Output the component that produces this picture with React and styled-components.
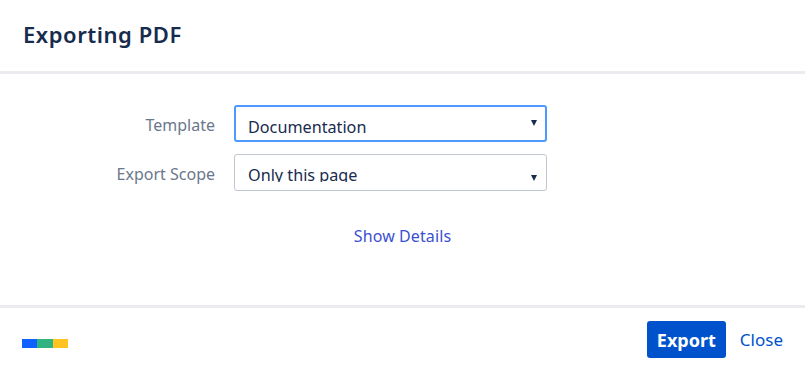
import React from "react";
import styled, { createGlobalStyle } from "styled-components";

const GlobalStyle = createGlobalStyle`
  html, body {
    margin: 0;
    padding: 0;
    background: #ffffff;
  }
  body {
    font-family: "Noto Sans", "Open Sans", sans-serif;
    color: #172b4d;
  }
`;

const Dialog = styled.div`
  width: 805px;
  height: 368px;
  display: flex;
  flex-direction: column;
  background: #fff;
`;

const Header = styled.header`
  height: 74px;
  flex: none;
  box-sizing: border-box;
  padding: 0 23px 4px;
  display: flex;
  align-items: center;
  border-bottom: 3px solid #ebecf0;
`;

const Title = styled.h1`
  margin: 0;
  font-size: 22px;
  font-weight: 600;
  color: #172b4d;
  letter-spacing: 0.55px;
`;

const Body = styled.div`
  height: 234px;
  flex: none;
  box-sizing: border-box;
  padding-top: 31px;
  border-bottom: 3px solid #ebecf0;
  display: flex;
  flex-direction: column;
`;

const Form = styled.div`
  display: grid;
  grid-template-columns: 215px 313px;
  column-gap: 19px;
  row-gap: 12px;
  align-items: center;
`;

const Label = styled.label`
  text-align: right;
  font-size: 16px;
  color: #6b778c;
  margin-top: 2px;
`;

const Select = styled.div`
  position: relative;
  height: 37px;
  box-sizing: border-box;
  border: ${(p) => (p.$focused ? "2px solid #4c9aff" : "1px solid #c1c7d0")};
  border-radius: 3px;
  padding-left: ${(p) => (p.$focused ? "12px" : "13px")};
  overflow: hidden;
  font-size: 16.2px;
  color: #172b4d;
  background: #fff;
`;

/* the scope field's value sits low and loses its descenders, as in the original */
const SelectText = styled.div`
  margin-top: 9px;
  height: ${(p) => (p.$clipped ? "18px" : "22px")};
  line-height: 22px;
  overflow: hidden;
  white-space: nowrap;
`;

const Caret = styled.span`
  position: absolute;
  right: ${(p) => (p.$focused ? "8px" : "9px")};
  top: ${(p) => (p.$focused ? "13px" : "20px")};
  width: 0;
  height: 0;
  border-left: 3px solid transparent;
  border-right: 3px solid transparent;
  border-top: 6px solid #172b4d;
`;

const DetailsRow = styled.div`
  display: flex;
  justify-content: center;
  padding-top: 34px;
`;

const Link = styled.a`
  font-size: 16px;
  color: #3b4fd1;
  text-decoration: none;
  cursor: pointer;
  letter-spacing: 0.1px;
`;

const Footer = styled.footer`
  height: 60px;
  flex: none;
  display: flex;
  align-items: center;
  justify-content: space-between;
  padding: 0 22px;
`;

const Brand = styled.div`
  display: flex;
  height: 9px;
  margin-top: 11px;
`;

const BrandBar = styled.span`
  width: ${(p) => p.$w}px;
  height: 9px;
  background: ${(p) => p.$color};
`;

const Actions = styled.div`
  display: flex;
  align-items: center;
  gap: 14px;
  margin-top: 3px;
`;

const PrimaryButton = styled.button`
  height: 37px;
  width: 79px;
  border: none;
  border-radius: 3px;
  background: #0052cc;
  color: #fff;
  font-family: inherit;
  font-size: 18px;
  font-weight: 700;
  cursor: pointer;
  padding: 0;
`;

const LinkButton = styled.button`
  border: none;
  background: none;
  padding: 0;
  font-family: inherit;
  font-size: 17px;
  color: #0052cc;
  cursor: pointer;
`;

export default function App() {
  return (
    <>
      <GlobalStyle />
      <Dialog>
        <Header>
          <Title>Exporting PDF</Title>
        </Header>
        <Body>
          <Form>
            <Label>Template</Label>
            <Select $focused>
              <SelectText>Documentation</SelectText>
              <Caret $focused />
            </Select>
            <Label>Export Scope</Label>
            <Select>
              <SelectText $clipped>Only this page</SelectText>
              <Caret />
            </Select>
          </Form>
          <DetailsRow>
            <Link>Show Details</Link>
          </DetailsRow>
        </Body>
        <Footer>
          <Brand>
            <BrandBar $w={15} $color="#0f62fe" />
            <BrandBar $w={16} $color="#2fb380" />
            <BrandBar $w={15} $color="#ffc421" />
          </Brand>
          <Actions>
            <PrimaryButton>Export</PrimaryButton>
            <LinkButton>Close</LinkButton>
          </Actions>
        </Footer>
      </Dialog>
    </>
  );
}
